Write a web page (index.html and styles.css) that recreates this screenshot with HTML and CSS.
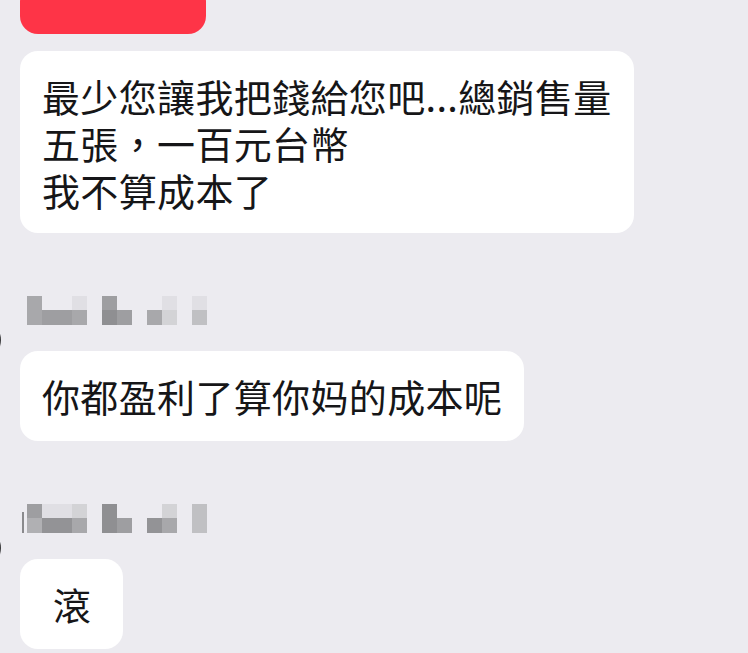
FILE: index.html
```html
<!DOCTYPE html>
<html lang="zh-Hant">
<head>
    <meta charset="UTF-8">
    <meta name="viewport" content="width=device-width, initial-scale=1.0">
    <title>Chat</title>
    <link rel="stylesheet" href="styles.css">
</head>
<body>
    <div class="chat">
        <div class="redact"></div>

        <div class="bubble first">最少您讓我把錢給您吧...總銷售量<br>五張，一百元台幣<br>我不算成本了</div>

        <div class="sender">
            <span class="avatar"></span>
            <!-- 打了馬賽克的名字 -->
            <div class="pixels">
                <i class="a"></i><i></i><i></i><i class="e"></i><i></i><i class="b"></i><i></i><i></i><i></i><i class="e"></i><i></i><i class="e"></i>
                <i class="a"></i><i class="b"></i><i class="b"></i><i class="a"></i><i></i><i class="c"></i><i class="b"></i><i></i><i class="a"></i><i class="d"></i><i></i><i class="f"></i>
            </div>
        </div>

        <div class="bubble">你都盈利了算你妈的成本呢</div>

        <div class="sender">
            <span class="avatar"></span>
            <span class="mark"></span>
            <div class="pixels">
                <i class="b"></i><i class="e"></i><i class="e"></i><i class="d"></i><i></i><i class="c"></i><i></i><i></i><i></i><i class="d"></i><i></i><i class="f"></i>
                <i class="h"></i><i class="g"></i><i class="g"></i><i class="a"></i><i></i><i class="c"></i><i class="b"></i><i></i><i class="g"></i><i class="a"></i><i></i><i class="f"></i>
            </div>
        </div>

        <div class="bubble single">滾</div>
    </div>
</body>
</html>
```

FILE: styles.css
```css
body {
    margin: 0;
    background-color: #ecebf0;
    font-family: "Noto Sans CJK TC", "Noto Sans CJK SC", sans-serif;
    color: #161618;
    overflow: hidden;
    height: 653px;
}
.chat {
    padding-left: 20px;
    display: flex;
    flex-direction: column;
    align-items: flex-start;
}
.redact {
    width: 186px;
    height: 50px;
    margin-top: -16px;
    background-color: #fe3447;
    border-radius: 18px;
}
.bubble {
    background-color: #ffffff;
    border-radius: 18px;
    padding: 21px 22px 22px;
    font-size: 38px;
    line-height: 47px;
    letter-spacing: 0.35px;
    margin-top: 26px;
}
.bubble.first {
    margin-top: 17px;
    padding-bottom: 20px;
}
.bubble.single {
    padding: 21px 32px 22px 33px;
}
.sender {
    position: relative;
    margin-top: 63px;
    padding-left: 7px;
}
.avatar {
    position: absolute;
    left: -59px;
    top: 24px;
    width: 40px;
    height: 40px;
    border-radius: 50%;
    background-color: #3a3a3c;
}
.mark {
    position: absolute;
    left: 2px;
    top: 8px;
    width: 2px;
    height: 21px;
    background-color: #8a8a8d;
}
.pixels {
    display: grid;
    grid-template-columns: repeat(12, 15px);
    grid-template-rows: 14px 15px;
}
.pixels i { display: block; }
.pixels .a { background-color: #a8a8ab; }
.pixels .b { background-color: #9e9ea1; }
.pixels .c { background-color: #8f8f92; }
.pixels .d { background-color: #d3d3d6; }
.pixels .e { background-color: #e0dfe4; }
.pixels .f { background-color: #c0c0c3; }
.pixels .g { background-color: #939396; }
.pixels .h { background-color: #b0b0b3; }
```
